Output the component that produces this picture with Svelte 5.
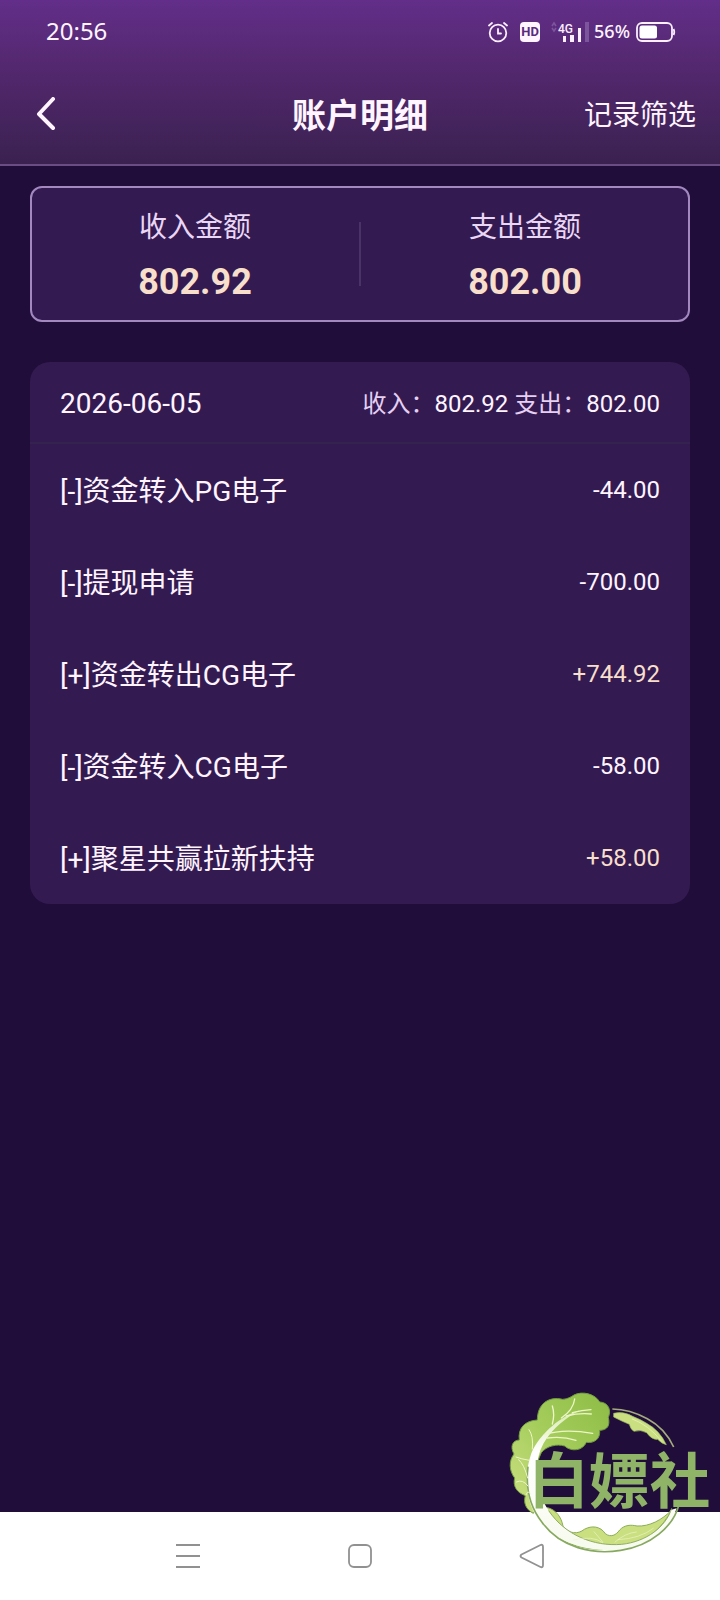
<script>
	const totals = [
		{ label: "收入金额", value: "802.92" },
		{ label: "支出金额", value: "802.00" },
	];

	const day = { date: "2026-06-05", income: "802.92", expense: "802.00" };

	const records = [
		{ name: "[-]资金转入PG电子", amount: "-44.00" },
		{ name: "[-]提现申请", amount: "-700.00" },
		{ name: "[+]资金转出CG电子", amount: "+744.92" },
		{ name: "[-]资金转入CG电子", amount: "-58.00" },
		{ name: "[+]聚星共赢拉新扶持", amount: "+58.00" },
	];
</script>

<div class="app">
	<header>
		<div class="status">
			<span class="time">20:56</span>
			<div class="signals">
				<svg width="20" height="22" viewBox="0 0 20 22" fill="none" stroke="#fbeeff" stroke-width="1.8" stroke-linecap="round">
					<circle cx="10" cy="12" r="8.3" />
					<path d="M10 8v4.5h3M1 4.5 4 2M19 4.5 16 2" />
				</svg>
				<span class="hd">HD</span>
				<svg class="cell" width="40" height="22" viewBox="0 0 40 22">
					<path d="m2 5 2-3 2 3M2 7l2 3 2-3" fill="none" stroke="#7d559c" stroke-width="1.6" />
					<text x="8" y="12" font-size="12" font-weight="500" fill="#fbeeff">4G</text>
					<path d="M13 15h3v6h-3zM20 14h4v7h-4zM28 7h3v14h-3z" fill="#fbeeff" />
					<path d="M35 1h4v20h-4z" fill="#7d559c" />
				</svg>
				<span class="percent">56%</span>
				<svg width="40" height="22" viewBox="0 0 40 22">
					<rect x="1" y="2" width="35" height="18" rx="5" fill="none" stroke="#fbeeff" stroke-width="1.8" />
					<rect x="3.5" y="4.5" width="17.5" height="13" rx="2.5" fill="#fff" />
					<path d="M37.5 8q1.5 3 0 6" fill="none" stroke="#fbeeff" stroke-width="1.8" />
				</svg>
			</div>
		</div>
		<div class="bar">
			<button class="back" aria-label="返回">
				<svg width="20" height="34" viewBox="0 0 20 34" fill="none" stroke="#fff4ff" stroke-width="4" stroke-linecap="round" stroke-linejoin="round">
					<path d="M17 2 3 17l14 14" />
				</svg>
			</button>
			<h1>账户明细</h1>
			<button class="filter">记录筛选</button>
		</div>
	</header>

	<main>
		<section class="totals">
			{#each totals as total}
				<div class="total">
					<span class="label">{total.label}</span>
					<strong>{total.value}</strong>
				</div>
			{/each}
		</section>

		<section class="day">
			<div class="day-head">
				<time>{day.date}</time>
				<p>收入：<b>{day.income}</b> 支出：<b>{day.expense}</b></p>
			</div>
			<ul>
				{#each records as record}
					<li>
						<span class="name">{record.name}</span>
						<span class="amount" class:plus={record.amount[0] === "+"}>{record.amount}</span>
					</li>
				{/each}
			</ul>
		</section>
	</main>

	<nav>
		<button aria-label="菜单">
			<svg width="26" height="26" viewBox="0 0 26 26" stroke="#919191" stroke-width="2">
				<path d="M1 2h24M1 13h24M1 24h24" />
			</svg>
		</button>
		<button aria-label="主页">
			<svg width="26" height="26" viewBox="0 0 26 26" fill="none" stroke="#919191" stroke-width="1.8">
				<rect x="2" y="2" width="22" height="22" rx="5" />
			</svg>
		</button>
		<button aria-label="后退">
			<svg width="26" height="26" viewBox="0 0 26 26" fill="none" stroke="#919191" stroke-width="1.8" stroke-linejoin="round">
				<path d="M2.5 11.5 21.5 2q2.5-1 2.5 2v18q0 3-2.5 2L2.5 14.5q-2-1.5 0-3z" />
			</svg>
		</button>
	</nav>

	<!-- cabbage stamp -->
	<svg class="stamp" width="220" height="220" viewBox="0 0 660 660">
		<defs>
			<linearGradient id="leaf" x1="0" y1="1" x2="1" y2="0">
				<stop offset="0" stop-color="#cfe285" />
				<stop offset="0.5" stop-color="#a5cd5c" />
				<stop offset="1" stop-color="#8dbc45" />
			</linearGradient>
			<linearGradient id="rib" x1="0" y1="0" x2="0" y2="1">
				<stop offset="0" stop-color="#d9eaae" />
				<stop offset="0.3" stop-color="#fff" />
				<stop offset="1" stop-color="#f7faee" />
			</linearGradient>
		</defs>
		<path
			d="M100 400C76 388 70 366 76 347 50 338 38 318 44 294 27 272 26 242 42 222 29 200 38 180 58 180 53 145 74 122 112 120 112 72 145 48 188 58 204 57 212 51 222 45 247 32 286 42 299 66 325 67 335 91 325 112 331 139 321 150 299 151 301 177 284 190 259 187 248 213 213 216 194 198 170 191 140 198 124 218 103 257 102 325 122 365z"
			fill="url(#leaf)" stroke="#729b42" stroke-width="3" />
		<path
			d="M143 383C169 390 184 412 189 438 207 463 235 463 253 448 275 436 301 438 316 461 332 473 348 466 359 450 374 434 393 434 411 438 448 440 486 420 515 390 488 440 444 486 382 501 310 517 236 507 191 482 158 459 132 420 127 387z"
			fill="#c9df80" stroke="#8cad57" stroke-width="3" />
		<path
			d="M341 100Q370 93 398 109Q423 119 440 130Q479 151 499 194Q486 192 473 178Q456 180 440 158Q422 148 402 154Q392 149 388 133Q368 125 341 111z"
			fill="#c9df80" stroke="#9bba65" stroke-width="2" />
		<path
			d="M240 91C185 106 120 160 94 220 66 300 82 385 128 435 195 505 300 522 400 503 470 482 515 430 530 385L512 390C498 440 440 485 365 493 280 500 195 465 146 392 100 320 100 235 137 180 162 143 195 115 240 91z"
			fill="url(#rib)" />
		<path d="M84 260C76 326 90 382 127 428 181 503 279 525 362 511 453 498 519 439 536 377" fill="none" stroke="#86a95f" stroke-width="5" />
		<path d="M337 87Q390 88 442 116Q496 145 521 201" fill="none" stroke="#a3aa7c" stroke-width="5" />
		<path d="M146 392C195 465 280 500 365 493 440 485 498 440 515 385" fill="none" stroke="#91ad62" stroke-width="3" />
		<g fill="none" stroke="#edf5c8" stroke-linecap="round">
			<path d="M157 132Q165 103 157 78M184 114Q220 90 224 57M199 108Q239 98 274 102M217 98Q247 91 273 89M133 164Q190 145 278 160M142 174Q188 168 228 181" stroke-width="4" />
			<path d="M97 207Q101 168 87 149M88 241Q63 237 48 231M83 294Q73 254 56 239M84 318Q68 296 49 306M90 339Q81 331 78 345" stroke-width="3" />
			<path d="M220 480Q278 465 308 488M282 455Q291 465 308 486M345 486Q376 459 409 456M354 479Q420 476 460 445M397 117Q446 135 484 183" stroke-width="2" />
		</g>
		<text x="85" y="370" font-size="182" font-weight="700" fill="#8fb467">白嫖社</text>
	</svg>
</div>

<style>
	:global(body) {
		margin: 0;
		background: #200d3a;
	}

	.app {
		position: relative;
		display: flex;
		flex-direction: column;
		min-height: 100vh;
		font-family: Roboto, "Noto Sans CJK SC", sans-serif;
		color: #fff4ff;
		background: #200d3a;
	}

	button {
		padding: 0;
		border: 0;
		background: none;
		color: inherit;
		font-family: inherit;
		cursor: pointer;
	}

	svg {
		display: block;
	}

	header {
		background: linear-gradient(#622e89, #54286f 40%, #3a2150);
		border-bottom: 2px solid #6b4d86;
	}

	.status {
		display: flex;
		align-items: center;
		justify-content: space-between;
		height: 64px;
		padding: 0 44px 0 46px;
		font-family: "Noto Sans", sans-serif;
	}

	.time {
		padding-bottom: 2px;
		font-size: 24px;
		line-height: 24px;
	}

	.signals {
		display: flex;
		align-items: center;
	}

	.hd {
		width: 20px;
		margin: 0 10px 0 12px;
		border-radius: 4px;
		background: #fff4ff;
		color: #5a2b7c;
		font-family: Roboto, sans-serif;
		font-size: 13px;
		font-weight: 700;
		line-height: 20px;
		text-align: center;
	}

	.cell {
		overflow: visible;
		font-family: Roboto, sans-serif;
	}

	.percent {
		margin: 0 6px 0 4px;
		padding-bottom: 2px;
		font-size: 18px;
		font-weight: 500;
		line-height: 22px;
	}

	.bar {
		display: grid;
		grid-template-columns: 1fr auto 1fr;
		align-items: center;
		height: 100px;
		padding: 0 24px 0 36px;
	}

	.back {
		justify-self: start;
	}

	h1 {
		margin: 0 0 0 -12px;
		padding-top: 4px;
		font-size: 34px;
		font-weight: 700;
		line-height: 40px;
	}

	.filter {
		justify-self: end;
		padding-top: 4px;
		font-size: 28px;
		line-height: 40px;
	}

	main {
		flex: 1;
		padding: 20px 30px;
	}

	.totals {
		display: flex;
		gap: 4px;
		padding: 20px 0 16px;
		border: 2px solid #a388c0;
		border-radius: 12px;
		background: #331b52 linear-gradient(#4a3367, #4a3367) center / 2px 64px no-repeat;
	}

	.total {
		flex: 1;
		display: flex;
		flex-direction: column;
		align-items: center;
		gap: 12px;
	}

	.label {
		color: #ead6f5;
		font-size: 28px;
		line-height: 40px;
	}

	strong {
		color: #f8dfcb;
		font-size: 36px;
		font-weight: 700;
		line-height: 44px;
	}

	.day {
		margin-top: 40px;
		border-radius: 20px;
		background: #331b52;
	}

	.day-head {
		display: flex;
		align-items: center;
		justify-content: space-between;
		height: 80px;
		padding: 0 30px;
		border-bottom: 2px solid #35234f;
		font-size: 28px;
	}

	.day-head time {
		padding-top: 2px;
	}

	.day-head p {
		margin: 0;
		padding-bottom: 2px;
		color: #e5d0f2;
		font-size: 24px;
	}

	.day-head b {
		color: #fff4ff;
		font-weight: 400;
	}

	ul {
		margin: 0;
		padding: 0;
		list-style: none;
	}

	li {
		display: flex;
		align-items: center;
		justify-content: space-between;
		height: 92px;
		padding: 0 30px;
		font-size: 28px;
	}

	.name {
		padding-bottom: 2px;
	}

	.amount {
		font-size: 24px;
	}

	.plus {
		color: #f8dfcb;
	}

	nav {
		display: grid;
		grid-template-columns: repeat(3, 172px);
		justify-content: center;
		align-items: center;
		height: 88px;
		background: #fff;
	}

	nav button {
		justify-self: center;
	}

	.stamp {
		position: absolute;
		right: 0;
		bottom: 0;
		pointer-events: none;
	}
</style>
